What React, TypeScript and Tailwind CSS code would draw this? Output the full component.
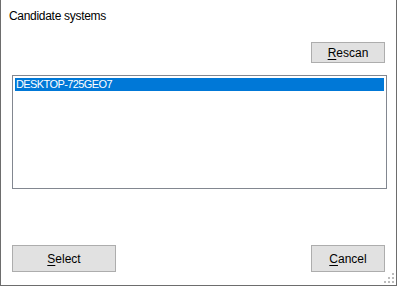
import React from 'react';

const font = { fontFamily: '"Liberation Sans", Arial, sans-serif' };

function Btn({ label, accel, className }: { label: string; accel: string; className: string }) {
    const i = label.indexOf(accel);
    return (
        <button className={`bg-[#e1e1e1] border border-[#adadad] text-[12px] text-black leading-none flex items-center justify-center ${className}`}>
            <span>
                {label.slice(0, i)}
                <span className="underline underline-offset-2">{accel}</span>
                {label.slice(i + 1)}
            </span>
        </button>
    );
}

export default function App() {
    return (
        <div style={font} className="relative w-[397px] h-[286px] bg-white border-x border-b border-[#6d6d6d] flex flex-col text-black">
            <div className="pl-[8px] pt-[9px] text-[12px] leading-[15px] tracking-[-0.3px]">Candidate systems</div>

            <div className="flex justify-end pr-[11px] mt-[18px]">
                <Btn label="Rescan" accel="R" className="w-[74px] h-[21px]" />
            </div>

            <div className="ml-[11px] mr-[9px] mt-[12px] h-[114px] border border-[#828790] p-[2px]">
                <div className="bg-[#0078d7] text-white text-[11px] leading-[13px] tracking-[-0.6px] px-[1px]">DESKTOP-725GEO7</div>
            </div>

            <div className="flex-1" />

            <div className="flex justify-between pl-[11px] pr-[11px] pb-[13px]">
                <Btn label="Select" accel="S" className="w-[104px] h-[27px]" />
                <Btn label="Cancel" accel="C" className="w-[74px] h-[27px]" />
            </div>

            {/* size grip */}
            <svg className="absolute right-[1px] bottom-[1px]" width="11" height="11" viewBox="0 0 11 11">
                <g fill="#bcbcbc">
                    <rect x="8" y="0" width="2" height="2" />
                    <rect x="4" y="4" width="2" height="2" />
                    <rect x="8" y="4" width="2" height="2" />
                    <rect x="0" y="8" width="2" height="2" />
                    <rect x="4" y="8" width="2" height="2" />
                    <rect x="8" y="8" width="2" height="2" />
                </g>
            </svg>
        </div>
    );
}
